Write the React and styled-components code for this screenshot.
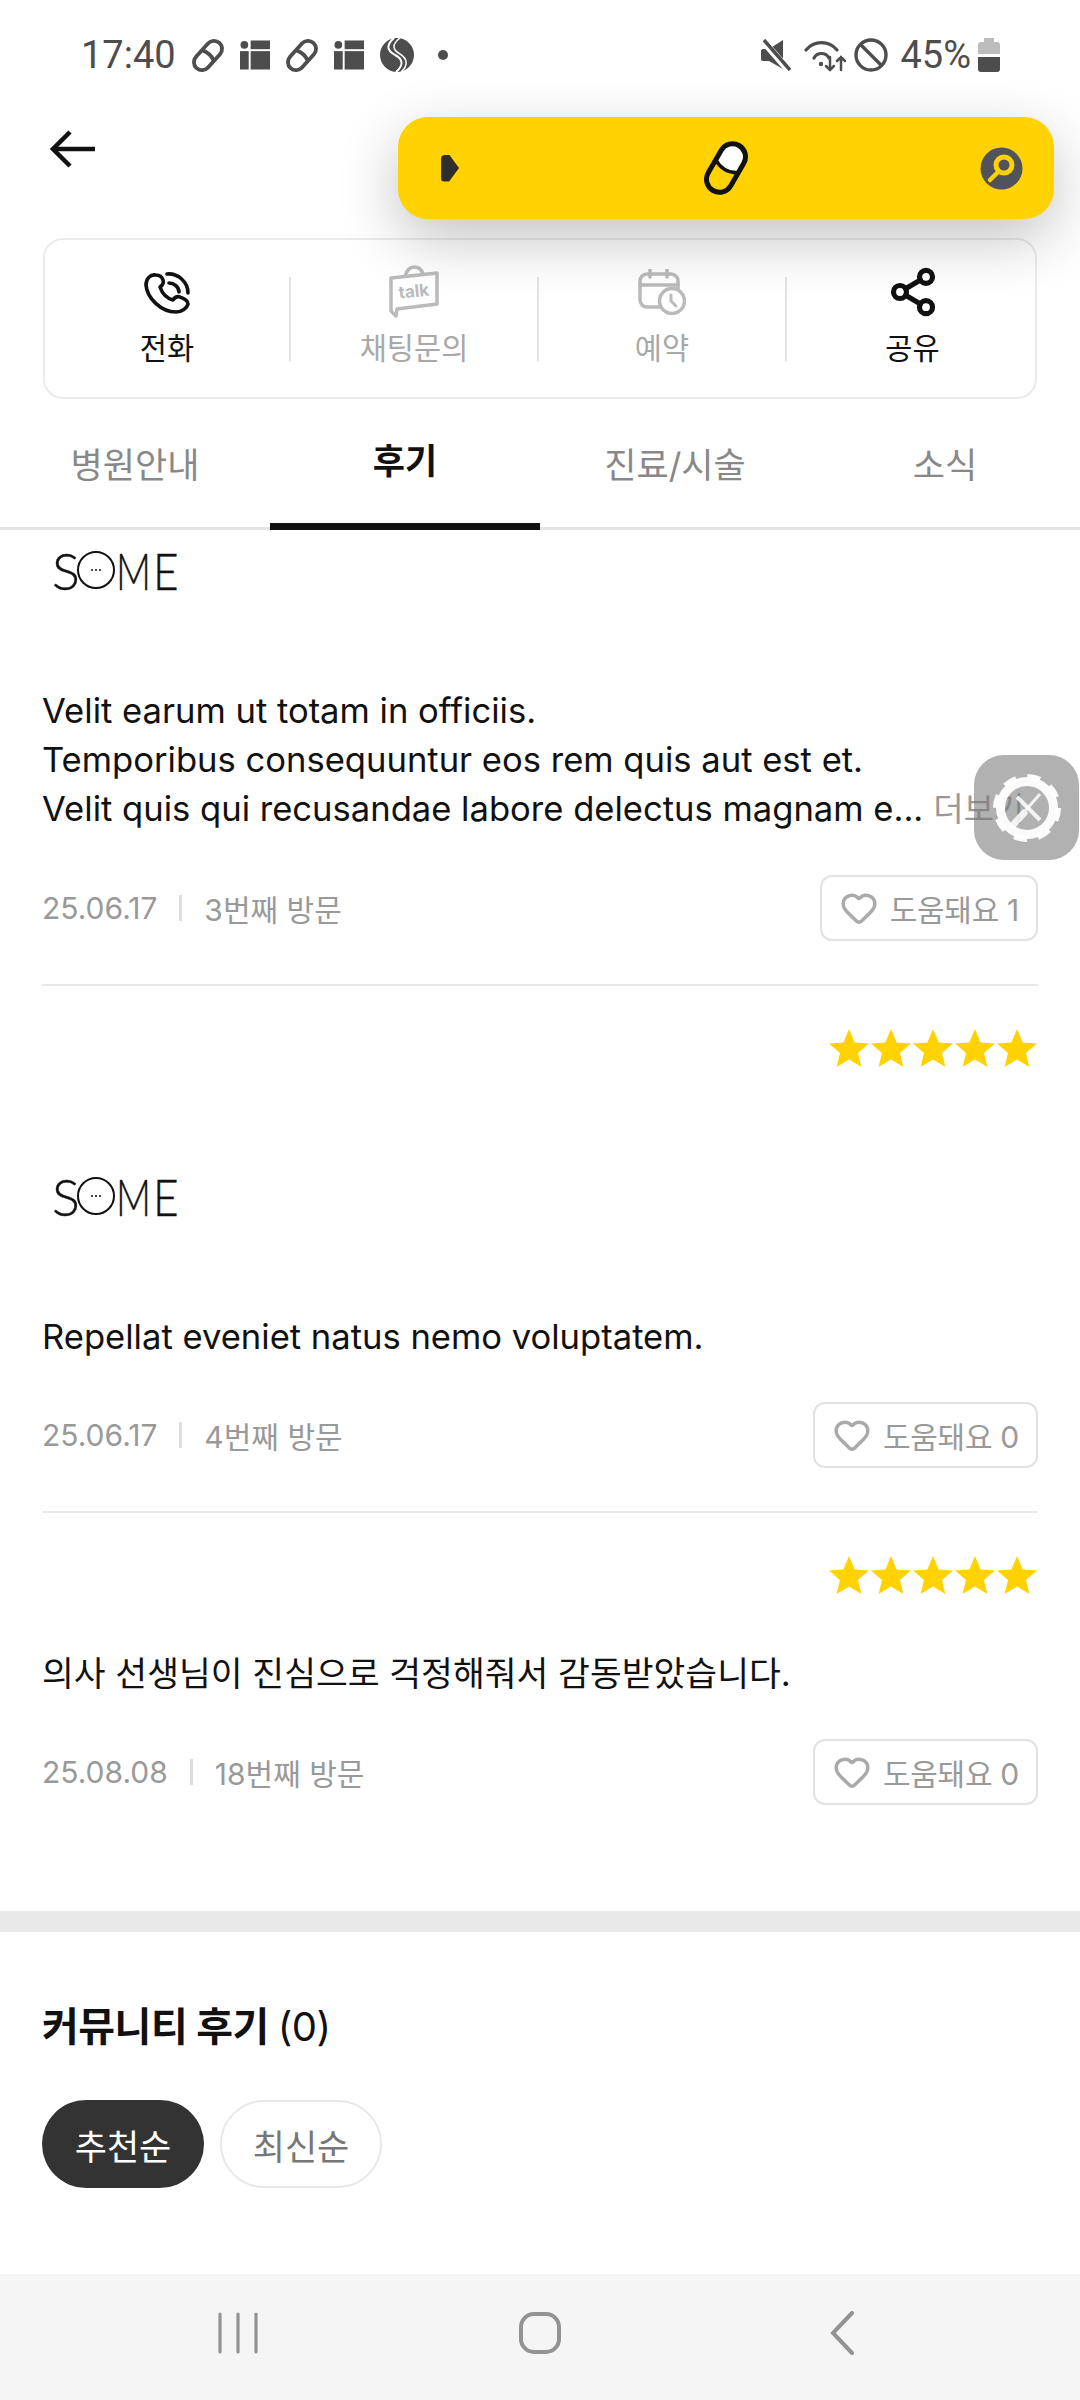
import React from 'react'
import styled, { createGlobalStyle } from 'styled-components'
import { Heart, Share2 } from 'lucide-react'

const GlobalStyle = createGlobalStyle`
  html, body { margin: 0; padding: 0; background: #fff; }
  * { box-sizing: border-box; }
`

const Page = styled.div`
  position: relative;
  width: 1080px;
  height: 2400px;
  overflow: hidden;
  display: flex;
  flex-direction: column;
  background: #fff;
  font-family: Inter, "Noto Sans CJK KR", sans-serif;
  color: #111;
`

const StatusBar = styled.div`
  height: 110px;
  padding: 0 80px 0 81px;
  display: flex;
  align-items: center;
  justify-content: space-between;
  font-family: Roboto, sans-serif;
  font-size: 38px;
  color: #4d4d4d;
`
const StatusGroup = styled.div`
  display: flex;
  align-items: center;
  gap: ${p => p.$gap}px;
`
const Percent = styled.span`
  margin-left: 4px;
  margin-right: -1px;
`
const Dot = styled.span`
  width: 10px;
  height: 10px;
  border-radius: 50%;
  background: #4d4d4d;
  margin-left: 8px;
`
const MuteSlot = styled.span`
  display: flex;
  margin-right: 5px;
`

const TopBar = styled.div`
  height: 128px;
  padding: 20px 0 0 50px;
`
const FloatBar = styled.div`
  position: absolute;
  top: 117px;
  left: 398px;
  width: 656px;
  height: 102px;
  padding: 0 31px 0 43px;
  display: flex;
  align-items: center;
  justify-content: space-between;
  background: #ffd200;
  border-radius: 30px;
  box-shadow: 0 20px 60px rgba(0, 0, 0, 0.24);
  z-index: 2;
`
const Caret = styled.span`
  width: 18px;
  height: 27px;
  background: #2e2e2e;
  border-radius: 4px;
  clip-path: polygon(0 0, 45% 0, 100% 50%, 45% 100%, 0 100%);
`
const PillSlot = styled.span`
  display: flex;
  margin-left: 13px;
`

const ActionCard = styled.div`
  margin: 0 43px;
  height: 161px;
  border: 2px solid #ebebeb;
  border-radius: 20px;
  padding-top: 37px;
  display: grid;
  grid-template-columns: 246px 248px 248px 1fr;
  align-items: start;
`
const Action = styled.div`
  height: 84px;
  padding-left: ${p => (p.$last ? 3 : 0)}px;
  display: flex;
  flex-direction: column;
  align-items: center;
  color: ${p => (p.$off ? '#a8a8a8' : '#111')};
  border-right: ${p => (p.$last ? 'none' : '2px solid #e3e3e3')};
`
const ActionIcon = styled.div`
  height: 56px;
  flex: none;
  margin-top: -13px;
  display: flex;
  align-items: center;
  justify-content: center;
`
const ActionLabel = styled.span`
  flex: none;
  font-size: 29.5px;
  line-height: 40px;
  margin-top: 8px;
`

const Tabs = styled.div`
  height: 131px;
  display: grid;
  grid-template-columns: repeat(4, 1fr);
  border-bottom: 3px solid #e4e4e4;
`
const Tab = styled.div`
  display: flex;
  align-items: center;
  justify-content: center;
  padding-bottom: 5px;
  margin-bottom: -3px;
  font-size: 35px;
  font-weight: ${p => (p.$active ? 700 : 400)};
  color: ${p => (p.$active ? '#111' : '#888')};
  border-bottom: ${p => (p.$active ? '7px solid #111' : 'none')};
`

const Reviews = styled.div`
  padding: 0 42px;
  height: 1381px;
`
const Review = styled.div`
  padding: ${p => p.$top}px 0 ${p => p.$bottom}px;
  border-bottom: ${p => (p.$last ? 'none' : '2px solid #e8e8e8')};
`
const Stars = styled.div`
  display: flex;
  justify-content: flex-end;
  gap: 2px;
  height: 38px;
  margin-bottom: ${p => p.$gap}px;
  margin-right: 1px;
`
const Logo = styled.div`
  display: flex;
  align-items: center;
  height: 38px;
  margin: 0 0 97px 10px;
  font-family: Lato, sans-serif;
  font-weight: 300;
  font-size: 52px;
  line-height: 38px;
  color: #111;
  -webkit-text-stroke: 0.4px #111;
`
const LogoLetters = styled.span`
  display: inline-block;
  transform: scaleX(${p => p.$sx || 1});
  transform-origin: left center;
  width: ${p => p.$w}px;
`
const LogoRing = styled.span`
  width: 38px;
  height: 38px;
  margin: 0 1px 0 1px;
  border: 2.5px solid #111;
  border-radius: 50%;
  display: flex;
  align-items: center;
  justify-content: center;
  gap: 2px;
`
const LogoDot = styled.i`
  width: 2px;
  height: 2px;
  background: #111;
  border-radius: 50%;
`
const Body = styled.div`
  font-size: 34.6px;
  line-height: 49px;
  color: #111;
  white-space: nowrap;
`
const More = styled.span`
  color: #999;
  font-size: 33px;
  margin-left: 10px;
`
const MetaRow = styled.div`
  display: flex;
  align-items: center;
  justify-content: space-between;
  margin-top: ${p => p.$gap}px;
`
const Meta = styled.div`
  display: flex;
  align-items: center;
  font-size: 30px;
  color: #999;
`
const MetaBar = styled.span`
  width: 3px;
  height: 26px;
  margin: 0 22px;
  background: #ddd;
`
const LikeButton = styled.div`
  height: 66px;
  padding: 0 17px 0 18px;
  display: flex;
  align-items: center;
  gap: 12px;
  border: 2px solid #e2e2e2;
  border-radius: 12px;
  font-size: 30px;
  letter-spacing: -0.3px;
  color: #999;
`

const SectionGap = styled.div`
  height: 21px;
  background: #e9e9e9;
`
const Community = styled.div`
  flex: 1;
  padding: 72px 42px 0;
`
const CommunityTitle = styled.h2`
  margin: 0;
  font-size: 40px;
  line-height: 46px;
  font-weight: 700;
  color: #111;
  letter-spacing: -0.5px;
  span { font-weight: 400; }
`
const Chips = styled.div`
  display: flex;
  gap: 16px;
  margin-top: 50px;
`
const Chip = styled.div`
  width: 162px;
  height: 88px;
  display: flex;
  align-items: center;
  justify-content: center;
  border-radius: 44px;
  font-size: 35px;
  color: ${p => (p.$on ? '#fff' : '#777')};
  background: ${p => (p.$on ? '#333' : '#fff')};
  border: ${p => (p.$on ? 'none' : '2px solid #e8e8e8')};
`

const NavBar = styled.div`
  height: 126px;
  background: #f5f5f5;
  display: grid;
  grid-template-columns: repeat(3, 1fr);
  justify-items: center;
  align-items: center;
  padding: 0 87px 8px;
  color: #939393;
`

const Floating = styled.div`
  position: absolute;
  top: 755px;
  left: 974px;
  width: 105px;
  height: 105px;
  border-radius: 30px;
  background: rgba(120, 120, 120, 0.58);
  display: flex;
  align-items: center;
  justify-content: center;
  z-index: 3;
`

function PillGlyph() {
  return (
    <svg width="34" height="35" viewBox="-2 -2 40 40">
      <g transform="rotate(42 18 18)" fill="none" stroke="#4d4d4d" strokeWidth="4.5">
        <rect x="8.5" y="-2" width="19" height="40" rx="9.5" />
        <path d="M8.5 18 Q18 14 27.5 18" />
      </g>
    </svg>
  )
}

function GridGlyph() {
  return (
    <svg width="30" height="30" viewBox="0 0 31 30" fill="#4d4d4d">
      <circle cx="4.5" cy="4.5" r="4" />
      <rect x="11" y="0" width="20" height="9" />
      <rect x="0" y="11" width="9" height="19" />
      <rect x="11" y="11" width="20" height="19" />
    </svg>
  )
}

function BallGlyph() {
  return (
    <svg width="36" height="34" viewBox="0 0 36 34">
      <circle cx="18" cy="17" r="17" fill="#4d4d4d" />
      <path d="M15 0 C6 8 9 13 16 17 C24 21 25 27 17 34" fill="none" stroke="#fff" strokeWidth="2" />
      <path d="M21 0 C12 7 14 12 21 16 C29 21 29 28 22 34" fill="none" stroke="#fff" strokeWidth="1.5" />
    </svg>
  )
}

function MuteGlyph() {
  return (
    <svg width="30" height="32" viewBox="0 0 30 32">
      <path d="M0 12 Q0 10 2 10 H8 L22 1 V30 L8 22 H2 Q0 22 0 20 Z" fill="#4d4d4d" />
      <path d="M3 3 L29 33" stroke="#fff" strokeWidth="7" />
      <path d="M3 1 L29 31" stroke="#4d4d4d" strokeWidth="3.5" />
    </svg>
  )
}

function WifiGlyph() {
  return (
    <svg width="42" height="33" viewBox="0 0 42 33" fill="none" stroke="#4d4d4d" strokeWidth="3.2" strokeLinecap="round">
      <path d="M2 11 A20 20 0 0 1 33 11" />
      <path d="M10 19 A8.5 8.5 0 0 1 25 19" />
      <circle cx="17" cy="25" r="2.2" fill="#4d4d4d" stroke="none" />
      <path d="M26 18 V31 M22 27 L26 31 L30 27" strokeWidth="2.5" />
      <path d="M37 31 V18 M33 22 L37 18 L41 22" strokeWidth="2.5" />
    </svg>
  )
}

function BlockGlyph() {
  return (
    <svg width="34" height="34" viewBox="0 0 34 34" fill="none" stroke="#4d4d4d" strokeWidth="3.4">
      <circle cx="17" cy="17" r="15" />
      <path d="M6.5 6.5 L27.5 27.5" />
    </svg>
  )
}

function BatteryGlyph() {
  return (
    <svg width="22" height="34" viewBox="0 0 22 34">
      <path d="M6 0 H16 V4 H19 Q22 4 22 7 V16 H0 V7 Q0 4 3 4 H6 Z" fill="#bdbdbd" />
      <path d="M0 19 H22 V31 Q22 34 19 34 H3 Q0 34 0 31 Z" fill="#4d4d4d" />
    </svg>
  )
}

function BackArrow() {
  return (
    <svg width="46" height="38" viewBox="0 0 46 38" fill="none" stroke="#111" strokeWidth="4.5">
      <path d="M45 19 H4" />
      <path d="M20 2 L3 19 L20 36" />
    </svg>
  )
}

function SearchBadge() {
  return (
    <svg width="43" height="43" viewBox="0 0 43 43">
      <circle cx="21.5" cy="21.5" r="21" fill="#50535a" />
      <circle cx="24" cy="18" r="8" fill="none" stroke="#ffd200" strokeWidth="5" />
      <path d="M18 25 L10 33" stroke="#ffd200" strokeWidth="4.5" strokeLinecap="round" />
    </svg>
  )
}

function YellowPill() {
  return (
    <svg width="48" height="54" viewBox="0 0 48 54">
      <g transform="rotate(30 24 27)" fill="none">
        <path d="M13 27 V14 A11 11 0 0 1 35 14 V27 Q24 33 13 27 Z" fill="#fff" />
        <rect x="11" y="1" width="26" height="52" rx="13" stroke="#111" strokeWidth="5" />
        <path d="M11 25 Q24 33 37 25" stroke="#111" strokeWidth="3.5" />
      </g>
    </svg>
  )
}

function PhoneIcon() {
  return (
    <svg width="46" height="43" viewBox="0 0 46 43" fill="none" stroke="#111" strokeWidth="3.6" strokeLinecap="round" strokeLinejoin="round">
      <path d="M12 4 C6 3 2 8 2 14 C3 27 17 41 32 41 C38 41 43 37 44 33 C44 29 40 28 36 26 C33 25 31 26 29 29 C22 27 18 22 16 16 C19 14 20 12 19 9 C18 6 15 4 12 4 Z" />
      <path d="M23 3 C34 2 44 11 44 22" />
      <path d="M25 12 C30 12 35 16 35 21" />
    </svg>
  )
}

function TalkIcon() {
  return (
    <svg width="52" height="54" viewBox="0 0 52 54" fill="none" stroke="#bbb" strokeWidth="3.5" strokeLinejoin="round">
      <path d="M3 13 L49 8 V39 L9 44 L8 51 L3 46 Z" />
      <path d="M17 11 Q20 2 26 2 Q33 2 35 9" />
      <text
        x="26"
        y="32"
        textAnchor="middle"
        transform="rotate(-6 26 28)"
        fontFamily="Inter, sans-serif"
        fontWeight="700"
        fontSize="17"
        fill="#bbb"
        stroke="none"
      >
        talk
      </text>
    </svg>
  )
}

function CalendarIcon() {
  return (
    <svg width="48" height="46" viewBox="0 0 48 46" fill="none" stroke="#bbb" strokeWidth="3.5" strokeLinecap="round">
      <rect x="2" y="5" width="38" height="33" rx="7" />
      <path d="M2 16 H40 M12 1 V8 M29 1 V8" />
      <circle cx="34" cy="32" r="12.5" fill="#fff" />
      <path d="M33 26 V32 L38 37" strokeWidth="3" />
    </svg>
  )
}

function GearIcon() {
  return (
    <svg width="70" height="70" viewBox="0 0 70 70" fill="none" stroke="#fff">
      <circle cx="35" cy="35" r="26.5" strokeWidth="9" opacity="0.95" />
      <circle cx="35" cy="35" r="31" strokeWidth="6" strokeDasharray="13 11.35" opacity="0.95" />
      <path d="M25 24 L48 47" strokeWidth="4" opacity="0.85" />
      <path d="M34 37 L48 21" strokeWidth="3" opacity="0.85" />
      <path d="M22 51 L32 40" strokeWidth="7" strokeLinecap="round" opacity="0.85" />
    </svg>
  )
}

function StarRow({ gap }) {
  return (
    <Stars $gap={gap}>
      {[0, 1, 2, 3, 4].map(i => (
        <svg key={i} width="40" height="38" viewBox="0 0 40 38">
          <path d="M20 0 L25.6 13.5 L40 14.6 L29 24 L32.4 38 L20 30.5 L7.6 38 L11 24 L0 14.6 L14.4 13.5 Z" fill="#ffd200" />
        </svg>
      ))}
    </Stars>
  )
}

function SomeLogo() {
  return (
    <Logo>
      <LogoLetters $w={24}>S</LogoLetters>
      <LogoRing>
        <LogoDot />
        <LogoDot />
        <LogoDot />
      </LogoRing>
      <LogoLetters $w={37} $sx={0.74}>M</LogoLetters>
      <LogoLetters $w={20} $sx={0.85}>E</LogoLetters>
    </Logo>
  )
}

function Footer({ date, visit, likes, gap }) {
  return (
    <MetaRow $gap={gap}>
      <Meta>
        {date}
        <MetaBar />
        {visit}
      </Meta>
      <LikeButton>
        <Heart size={38} strokeWidth={2.2} color="#aaa" />
        도움돼요 {likes}
      </LikeButton>
    </MetaRow>
  )
}

export default function App() {
  return (
    <Page>
      <GlobalStyle />
      <StatusBar>
        <StatusGroup $gap={15}>
          <span>17:40</span>
          <PillGlyph />
          <GridGlyph />
          <PillGlyph />
          <GridGlyph />
          <BallGlyph />
          <Dot />
        </StatusGroup>
        <StatusGroup $gap={8}>
          <MuteSlot><MuteGlyph /></MuteSlot>
          <WifiGlyph />
          <BlockGlyph />
          <Percent>45%</Percent>
          <BatteryGlyph />
        </StatusGroup>
      </StatusBar>

      <TopBar>
        <BackArrow />
      </TopBar>
      <FloatBar>
        <Caret />
        <PillSlot><YellowPill /></PillSlot>
        <SearchBadge />
      </FloatBar>

      <ActionCard>
        <Action>
          <ActionIcon><PhoneIcon /></ActionIcon>
          <ActionLabel>전화</ActionLabel>
        </Action>
        <Action $off>
          <ActionIcon><TalkIcon /></ActionIcon>
          <ActionLabel>채팅문의</ActionLabel>
        </Action>
        <Action $off>
          <ActionIcon><CalendarIcon /></ActionIcon>
          <ActionLabel>예약</ActionLabel>
        </Action>
        <Action $last>
          <ActionIcon><Share2 size={52} strokeWidth={2.4} /></ActionIcon>
          <ActionLabel>공유</ActionLabel>
        </Action>
      </ActionCard>

      <Tabs>
        <Tab>병원안내</Tab>
        <Tab $active>후기</Tab>
        <Tab>진료/시술</Tab>
        <Tab>소식</Tab>
      </Tabs>

      <Reviews>
        <Review $top={21} $bottom={43}>
          <SomeLogo />
          <Body>
            Velit earum ut totam in officiis.<br />
            Temporibus consequuntur eos rem quis aut est et.<br />
            Velit quis qui recusandae labore delectus magnam e...<More>더보기</More>
          </Body>
          <Footer date="25.06.17" visit="3번째 방문" likes={1} gap={41} />
        </Review>
        <Review $top={43} $bottom={43}>
          <StarRow gap={110} />
          <SomeLogo />
          <Body>Repellat eveniet natus nemo voluptatem.</Body>
          <Footer date="25.06.17" visit="4번째 방문" likes={0} gap={41} />
        </Review>
        <Review $top={43} $bottom={0} $last>
          <StarRow gap={55} />
          <Body>의사 선생님이 진심으로 걱정해줘서 감동받았습니다.</Body>
          <Footer date="25.08.08" visit="18번째 방문" likes={0} gap={41} />
        </Review>
      </Reviews>

      <SectionGap />
      <Community>
        <CommunityTitle>커뮤니티 후기 <span>(0)</span></CommunityTitle>
        <Chips>
          <Chip $on>추천순</Chip>
          <Chip>최신순</Chip>
        </Chips>
      </Community>

      <NavBar>
        <svg width="40" height="42" viewBox="0 0 40 42" stroke="currentColor" strokeWidth="3.2" strokeLinecap="round">
          <path d="M2 2 V40 M20 2 V40 M38 2 V40" />
        </svg>
        <svg width="44" height="44" viewBox="0 0 44 44" fill="none" stroke="currentColor" strokeWidth="4">
          <rect x="3" y="3" width="38" height="38" rx="13" />
        </svg>
        <svg width="24" height="44" viewBox="0 0 24 44" fill="none" stroke="currentColor" strokeWidth="4" strokeLinecap="round">
          <path d="M22 2 L3 22 L22 42" />
        </svg>
      </NavBar>

      <Floating>
        <GearIcon />
      </Floating>
    </Page>
  )
}
